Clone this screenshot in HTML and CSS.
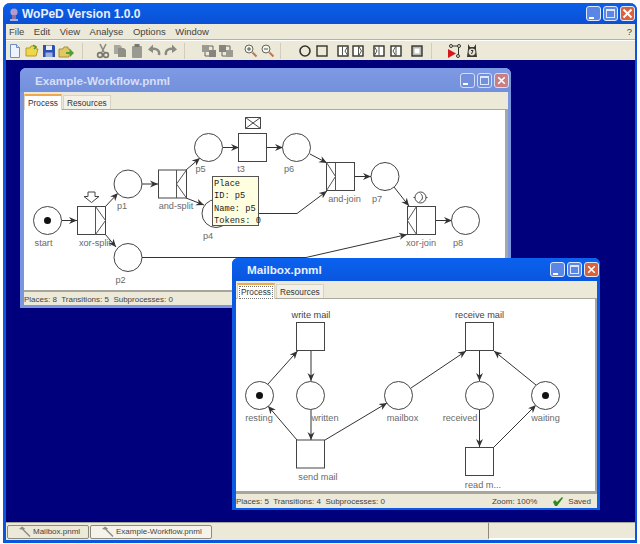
FILE: index.html
```html
<!DOCTYPE html>
<html>
<head lang="en">
    <meta charset="UTF-8">
    <title>WoPeD Version 1.0.0</title>
    <link rel="stylesheet" href="styles.css">
</head>
<body>
<div class="app">
    <div class="app-title">
        <svg class="app-logo" width="10" height="14" viewBox="0 0 10 14">
            <circle cx="5" cy="5" r="3.6" fill="#b89ac8"/>
            <rect x="3" y="8" width="4" height="4" fill="#8e6f9e"/>
            <path d="M1 13h8" stroke="#e8d8e8" stroke-width="1.4"/>
        </svg>
        <span class="app-name">WoPeD Version 1.0.0</span>
        <div class="ctrls">
            <span class="ctrl"><i class="ico-min"></i></span>
            <span class="ctrl"><i class="ico-max"></i></span>
            <span class="ctrl ctrl-close">
                <svg width="11" height="11" viewBox="0 0 11 11"><path d="M1.5 1.5l8 8M9.5 1.5l-8 8" stroke="#fff" stroke-width="2"/></svg>
            </span>
        </div>
    </div>

    <div class="menubar">
        <span>File</span><span>Edit</span><span>View</span><span>Analyse</span><span>Options</span><span>Window</span>
        <span class="menu-help">?</span>
    </div>

    <div class="toolbar">
        <div class="tgroup tgroup-file">
            <svg class="icon" viewBox="0 0 16 16"><path d="M3.5 1.5h6l3 3v10h-9z" fill="#eef3fb" stroke="#6f8fc4"/><path d="M9.5 1.5v3h3" fill="#cfdcf0" stroke="#6f8fc4"/></svg>
            <svg class="icon" viewBox="0 0 16 16"><path d="M2 5h4l1-2h5v3h2l-2 7H2z" fill="#f0d64a" stroke="#b59a2a"/><path d="M9 2l3 2-2 2" fill="none" stroke="#4a9a3a" stroke-width="1.5"/></svg>
            <svg class="icon" viewBox="0 0 16 16"><path d="M2 2h11l1 1v11H2z" fill="#2c4fb0"/><rect x="5" y="2.5" width="6" height="4.5" fill="#e8eefa"/><rect x="4.5" y="9.5" width="7" height="4.5" fill="#9ab0e0"/></svg>
            <svg class="icon" viewBox="0 0 16 16"><path d="M1 6h4l1-2h4v2h2l-1 8H1z" fill="#e2c860" stroke="#a89040"/><path d="M8 9h4V6l4 4-4 4v-3H8z" fill="#4e9e3a"/></svg>
        </div>
        <div class="tgroup tgroup-edit">
            <svg class="icon" viewBox="0 0 16 16"><path d="M5 1l4 8M11 1L7 9" stroke="#8a8a84" stroke-width="1.6" fill="none"/><circle cx="5" cy="12" r="2.4" fill="none" stroke="#77776f" stroke-width="1.6"/><circle cx="11" cy="12" r="2.4" fill="none" stroke="#77776f" stroke-width="1.6"/></svg>
            <svg class="icon" viewBox="0 0 16 16"><path d="M2 2h6l2 2v7H2z" fill="#a8a89e"/><path d="M6 5h6l2 2v7H6z" fill="#8f8f86"/></svg>
            <svg class="icon" viewBox="0 0 16 16"><rect x="3" y="3" width="10" height="12" rx="1" fill="#9a9a90"/><rect x="5.5" y="1" width="5" height="3" fill="#77776f"/></svg>
            <svg class="icon" viewBox="0 0 16 16"><path d="M13 12c1-4-2-7-7-6" fill="none" stroke="#8a8a82" stroke-width="2.4"/><path d="M7 1.5L2 6.5l5 3.5z" fill="#8a8a82"/></svg>
            <svg class="icon" viewBox="0 0 16 16"><path d="M3 12c-1-4 2-7 7-6" fill="none" stroke="#8a8a82" stroke-width="2.4"/><path d="M9 1.5l5 5-5 3.5z" fill="#8a8a82"/></svg>
        </div>
        <div class="tgroup tgroup-view">
            <svg class="icon" viewBox="0 0 16 16"><rect x="1" y="2" width="7" height="7" fill="#9a9a92"/><rect x="8" y="7" width="7" height="7" fill="#85857d"/><path d="M4 9v4h4M8 3h4v4" fill="none" stroke="#66665f"/></svg>
            <svg class="icon" viewBox="0 0 16 16"><rect x="1" y="2" width="7" height="7" fill="#85857d"/><rect x="8" y="7" width="7" height="7" fill="#9a9a92"/><path d="M4 9v4h4M8 3h4v4" fill="none" stroke="#66665f"/></svg>
            <svg class="icon icon-zoom" viewBox="0 0 16 16"><circle cx="6" cy="6" r="4" fill="#f4f4ee" stroke="#66665f"/><path d="M4 6h4M6 4v4" stroke="#55554f"/><path d="M9.5 9.5l4 4" stroke="#b87a50" stroke-width="2"/></svg>
            <svg class="icon" viewBox="0 0 16 16"><circle cx="6" cy="6" r="4" fill="#f4f4ee" stroke="#66665f"/><path d="M4 6h4" stroke="#55554f"/><path d="M9.5 9.5l4 4" stroke="#b87a50" stroke-width="2"/></svg>
        </div>
        <div class="tgroup tgroup-draw">
            <svg class="icon" viewBox="0 0 16 16"><circle cx="8" cy="8" r="5" fill="none" stroke="#33332e" stroke-width="1.6"/></svg>
            <svg class="icon" viewBox="0 0 16 16"><rect x="3" y="3" width="10" height="10" fill="none" stroke="#33332e" stroke-width="1.4"/></svg>
            <svg class="icon icon-gap" viewBox="0 0 16 16"><rect x="3" y="3" width="10" height="10" fill="#fff" stroke="#33332e" stroke-width="1.4"/><path d="M7.5 3v10M13 3l-3 5 3 5" fill="none" stroke="#55554f"/></svg>
            <svg class="icon icon-tight" viewBox="0 0 16 16"><rect x="3" y="3" width="10" height="10" fill="#fff" stroke="#33332e" stroke-width="1.4"/><path d="M8.500 3v10M8.500 3l3 5-3 5" fill="none" stroke="#55554f"/></svg>
            <svg class="icon icon-gap" viewBox="0 0 16 16"><rect x="3" y="3" width="10" height="10" fill="#fff" stroke="#33332e" stroke-width="1.4"/><path d="M8 3v10M3 3l3 5-3 5" fill="none" stroke="#55554f"/></svg>
            <svg class="icon" viewBox="0 0 16 16"><rect x="3" y="3" width="10" height="10" fill="#fff" stroke="#33332e" stroke-width="1.4"/><path d="M8 3v10M8 3L5 8l3 5" fill="none" stroke="#55554f"/></svg>
            <svg class="icon icon-gap" viewBox="0 0 16 16"><rect x="3" y="3" width="10" height="10" fill="#b8b8ae" stroke="#33332e" stroke-width="1.4"/><rect x="5.500" y="5.500" width="5" height="5" fill="#fff"/></svg>
        </div>
        <div class="tgroup tgroup-run">
            <svg class="icon" viewBox="0 0 16 16"><circle cx="4" cy="3" r="1.500" fill="none" stroke="#33332e"/><circle cx="12" cy="3" r="1.500" fill="none" stroke="#33332e"/><circle cx="11" cy="13" r="1.500" fill="none" stroke="#33332e"/><path d="M5.500 3h5M11.500 4.500v7" stroke="#33332e"/><path d="M1 6l8 4.500L1 15z" fill="#d8141c"/></svg>
            <svg class="icon" viewBox="0 0 16 16"><path d="M4 1l2 3h4l2-3v5l1 8H3l1-8z" fill="#3a3a36"/><circle cx="8" cy="9" r="3.400" fill="#e4e0cc"/><path d="M7 7.500h2L7.500 11" fill="none" stroke="#33332e"/></svg>
        </div>
    </div>

    <div class="desktop">
        <div class="win win-flow">
            <div class="win-title">
                <span class="win-name">Example-Workflow.pnml</span>
                <div class="ctrls ctrls-small">
                    <span class="ctrl"><i class="ico-min"></i></span>
                    <span class="ctrl"><i class="ico-max"></i></span>
                    <span class="ctrl ctrl-close">
                        <svg width="9" height="9" viewBox="0 0 11 11"><path d="M1.500 1.500l8 8M9.500 1.500l-8 8" stroke="#fff" stroke-width="2"/></svg>
                    </span>
                </div>
            </div>
            <div class="tabs">
                <span class="tab tab-on">Process</span>
                <span class="tab">Resources</span>
            </div>
            <div class="canvas">
                <svg class="net" viewBox="24 110 481 180">
                    <defs>
                        <marker id="arrow" markerUnits="userSpaceOnUse" markerWidth="9" markerHeight="8" refX="8" refY="4" orient="auto">
                            <path d="M0 0.500L8 4 0 7.500 2.500 4z" fill="#333"/>
                        </marker>
                    </defs>
                    <g class="edges">
                        <path d="M62 220.500H77"/>
                        <path d="M105 207L118 193"/>
                        <path d="M105 234L116 247"/>
                        <path d="M142 184H158"/>
                        <path d="M186 170L200 158"/>
                        <path d="M186 198L204 205"/>
                        <path d="M223 147.500H239"/>
                        <path d="M267 147.500H283"/>
                        <path d="M310 154L327 163"/>
                        <path d="M230 213.500H297L327 191"/>
                        <path d="M355 176.500H371"/>
                        <path d="M394 187L409 206"/>
                        <path d="M436 220.500H452"/>
                        <path d="M142 257.500H306L407 234.500"/>
                    </g>
                    <g class="nodes">
                        <circle cx="47.500" cy="220.500" r="14"/>
                        <circle cx="128" cy="184" r="14"/>
                        <circle cx="128" cy="257.500" r="14"/>
                        <circle cx="208.500" cy="147.500" r="14"/>
                        <circle cx="216" cy="213.500" r="14"/>
                        <circle cx="296.500" cy="147.500" r="14"/>
                        <circle cx="385" cy="176.500" r="14"/>
                        <circle cx="465.500" cy="220.500" r="14"/>
                        <rect x="77.500" y="206.500" width="28" height="28"/>
                        <rect x="158.500" y="170" width="28" height="28"/>
                        <rect x="238.500" y="133.500" width="28" height="28"/>
                        <rect x="326.500" y="162.500" width="28" height="28"/>
                        <rect x="407.500" y="206.500" width="28" height="28"/>
                    </g>
                    <g class="gates">
                        <path d="M95.500 206.500V234.500M95.500 206.500L105.500 220.500 95.500 234.500"/>
                        <path d="M176.500 170V198M186.500 170L176.500 184 186.500 198"/>
                        <path d="M335.500 162.500V190.500M326.500 162.500L335.500 176.500 326.500 190.500"/>
                        <path d="M416.500 206.500V234.500M416.500 206.500L407.500 220.500 416.500 234.500"/>
                    </g>
                    <circle class="token" cx="47.500" cy="220.500" r="3.500"/>
                    <path class="trigger" d="M88 192H95V196.500H99L91.500 202.500 84 196.500H88z"/>
                    <path class="trigger" d="M245.500 117.500H260.500V128.500H245.500zM245.500 117.500L260.500 128.500M260.500 117.500L245.500 128.500"/>
                    <circle class="trigger" cx="420.500" cy="197.500" r="5.500"/>
                    <path class="trigger" d="M420.500 193.500C423.500 196 423 200 419.500 201.500M413.500 197.500H415M426 197.500H427.500"/>
                    <text class="lbl" x="43.500" y="246">start</text>
                    <text class="lbl" x="95" y="246">xor-split</text>
                    <text class="lbl" x="122" y="209">p1</text>
                    <text class="lbl" x="120.500" y="283">p2</text>
                    <text class="lbl" x="200.500" y="172">p5</text>
                    <text class="lbl" x="176" y="209">and-split</text>
                    <text class="lbl" x="208" y="239">p4</text>
                    <text class="lbl" x="241" y="172">t3</text>
                    <text class="lbl" x="289" y="172">p6</text>
                    <text class="lbl" x="344.500" y="202">and-join</text>
                    <text class="lbl" x="377" y="202">p7</text>
                    <text class="lbl" x="421" y="246">xor-join</text>
                    <text class="lbl" x="458" y="246">p8</text>
                </svg>
                <div class="tip">Place<br>ID: p5<br>Name: p5<br>Tokens: 0</div>
            </div>
            <div class="status">
                <span>Places: 8&nbsp; Transitions: 5&nbsp; Subprocesses: 0</span>
            </div>
        </div>

        <div class="win win-mail">
            <div class="win-title">
                <span class="win-name">Mailbox.pnml</span>
                <div class="ctrls ctrls-small">
                    <span class="ctrl"><i class="ico-min"></i></span>
                    <span class="ctrl"><i class="ico-max"></i></span>
                    <span class="ctrl ctrl-close">
                        <svg width="9" height="9" viewBox="0 0 11 11"><path d="M1.500 1.500l8 8M9.500 1.500l-8 8" stroke="#fff" stroke-width="2"/></svg>
                    </span>
                </div>
            </div>
            <div class="tabs">
                <span class="tab tab-on tab-focus"><b>Process</b></span>
                <span class="tab">Resources</span>
            </div>
            <div class="canvas">
                <svg class="net" viewBox="236 299 359 192">
                    <g class="edges">
                        <path d="M268 384L297.500 351"/>
                        <path d="M311 350.500V381"/>
                        <path d="M311 409.500V440"/>
                        <path d="M297 440L268 406"/>
                        <path d="M325 440L387 403"/>
                        <path d="M411 388L466 351"/>
                        <path d="M479.500 350.500V381"/>
                        <path d="M479.500 409.500V447"/>
                        <path d="M494 447L536 405"/>
                        <path d="M536 385L494 351"/>
                    </g>
                    <g class="nodes">
                        <circle cx="259.500" cy="395.500" r="14"/>
                        <circle cx="310.500" cy="395.500" r="14"/>
                        <circle cx="398.500" cy="395.500" r="14"/>
                        <circle cx="479.500" cy="395.500" r="14"/>
                        <circle cx="545.500" cy="395.500" r="14"/>
                        <rect x="296.500" y="322.500" width="28" height="28"/>
                        <rect x="465.500" y="322.500" width="28" height="28"/>
                        <rect x="296.500" y="440" width="28" height="28"/>
                        <rect x="465.500" y="447.500" width="28" height="28"/>
                    </g>
                    <circle class="token" cx="259.500" cy="395.500" r="3.500"/>
                    <circle class="token" cx="545.500" cy="395.500" r="3.500"/>
                    <text class="lbl lbl-dark" x="311" y="318">write mail</text>
                    <text class="lbl lbl-dark" x="479.500" y="318">receive mail</text>
                    <text class="lbl" x="259" y="421">resting</text>
                    <text class="lbl" x="325" y="421">written</text>
                    <text class="lbl" x="402.500" y="421">mailbox</text>
                    <text class="lbl" x="460" y="421">received</text>
                    <text class="lbl" x="545.500" y="421">waiting</text>
                    <text class="lbl" x="318" y="480">send mail</text>
                    <text class="lbl" x="483" y="488">read m...</text>
                </svg>
            </div>
            <div class="status">
                <span>Places: 5&nbsp; Transitions: 4&nbsp; Subprocesses: 0</span>
                <span class="status-zoom">Zoom: 100%</span>
                <svg class="status-check" width="12" height="10" viewBox="0 0 12 10"><path d="M1 5l2 4h2l6-8-1-1-5 5-2-2z" fill="#2f8a1e"/></svg>
                <span class="status-saved">Saved</span>
            </div>
        </div>
    </div>

    <div class="taskbar">
        <span class="task">
            <svg class="task-ico" width="13" height="11" viewBox="0 0 13 11"><path d="M1 3L4 0.500 7 2.500 5.500 4z" fill="#8d8d88"/><path d="M5 3.500l7 7" stroke="#8d8d88" stroke-width="1.500"/></svg>
            Mailbox.pnml
        </span>
        <span class="task task-long">
            <svg class="task-ico" width="13" height="11" viewBox="0 0 13 11"><path d="M1 3L4 0.500 7 2.500 5.500 4z" fill="#8d8d88"/><path d="M5 3.500l7 7" stroke="#8d8d88" stroke-width="1.500"/></svg>
            Example-Workflow.pnml
        </span>
        <span class="task-end"></span>
    </div>
</div>
</body>
</html>
```

FILE: styles.css
```css
* {
    box-sizing: border-box;
    margin: 0;
    padding: 0;
}

html, body {
    height: 100%;
    overflow: hidden;
    background: #fff;
}

body {
    font-family: "Liberation Sans", Arial, sans-serif;
    font-size: 11px;
    color: #333;
}

.app {
    display: flex;
    flex-direction: column;
    width: 634px;
    height: 540px;
    margin: 3px 0 0 3px;
    border: 3px solid #0a56dc;
    border-top: 0;
    border-right-width: 2px;
    border-radius: 7px 7px 0 0;
    background: #ece9d8;
}

/* main title bar */
.app-title {
    display: flex;
    align-items: center;
    height: 21px;
    margin: 0 -2px 0 -3px;
    padding: 0 2px 0 5px;
    border-radius: 7px 7px 0 0;
    background: linear-gradient(#0a5fe8 0, #0a58e0 50%, #0a50d4 100%);
}

.app-logo {
    margin-left: 1px;
}

.app-name {
    margin-left: 3px;
    font-size: 12px;
    font-weight: bold;
    color: #e8f0ff;
}

.ctrls {
    display: flex;
    gap: 2px;
    margin-left: auto;
}

.ctrl {
    display: flex;
    align-items: center;
    justify-content: center;
    position: relative;
    width: 15px;
    height: 15px;
    border: 1px solid #dfe8fb;
    border-radius: 3px;
    background: #5a86e6;
}

.ctrl-close {
    background: #d9613c;
}

.ico-min {
    width: 5px;
    height: 2px;
    margin: 8px 5px 0 0;
    background: #fff;
}

.ico-max {
    width: 9px;
    height: 9px;
    border: 1px solid #dfe8fb;
    border-top-width: 2px;
}

/* menu and tools */
.menubar {
    display: flex;
    align-items: center;
    gap: 9.500px;
    height: 16px;
    padding: 0 3px;
    border-bottom: 1px solid #b5b2a4;
    font-size: 9.500px;
    color: #444;
}

.menu-help {
    margin-left: auto;
}

.toolbar {
    display: flex;
    align-items: center;
    height: 20px;
    padding-left: 1px;
    border-top: 1px solid #fff;
}

.tgroup {
    display: flex;
    gap: 1px;
}

.tgroup-edit {
    margin-left: 8px;
    padding-left: 12px;
    border-left: 1px solid #d0cdbc;
}

.tgroup-view {
    margin-left: 5px;
    padding-left: 16px;
    border-left: 1px solid #d0cdbc;
}

.tgroup-draw {
    margin-left: 4px;
    padding-left: 16px;
    border-left: 1px solid #d0cdbc;
}

.tgroup-run {
    margin-left: 6px;
    padding-left: 15px;
    border-left: 1px solid #d0cdbc;
}

.icon {
    display: block;
    flex: none;
    width: 16px;
    height: 16px;
}

.icon-zoom {
    margin-left: 8px;
}

.icon-gap {
    margin-left: 4px;
}

.icon-tight {
    margin-left: -2px;
}

/* desktop with the inner windows */
.desktop {
    position: relative;
    flex: 1;
    background: #00007c;
}

.win {
    position: absolute;
    display: flex;
    flex-direction: column;
    border-radius: 6px 6px 0 0;
    background: #ece9d8;
}

.win-flow {
    left: 14px;
    top: 8px;
    width: 491px;
    height: 240px;
    border: 3px solid #7b96e0;
    border-top: 0;
    border-left-width: 4px;
    --title-bg: linear-gradient(#7f9ae4, #7390dc);
    --title-fg: #d6def6;
}

.win-mail {
    left: 226px;
    top: 198px;
    width: 368px;
    height: 252px;
    border: 2px solid #0a5ae2;
    border-top: 0;
    border-left-width: 4px;
    border-right-width: 3px;
    --title-bg: linear-gradient(#0a62ee, #0a56de);
    --title-fg: #e8f0ff;
}

.win-title {
    display: flex;
    align-items: center;
    height: 24px;
    margin: 0 -3px 0 -4px;
    padding: 0 2px 0 15px;
    border-radius: 6px 6px 0 0;
    background: var(--title-bg);
}

.win-mail .win-title {
    height: 23px;
    padding-right: 1px;
}

.win-name {
    font-size: 11.700px;
    font-weight: bold;
    color: var(--title-fg);
}

.ctrls-small .ctrl {
    width: 15px;
    height: 15px;
}

.win-flow .ctrl {
    border-color: #d6def6;
    background: #7390dc;
}

.win-flow .ctrl-close {
    background: #c87f84;
}

.tabs {
    display: flex;
    align-items: flex-end;
    gap: 1px;
    height: 18px;
    border-bottom: 1px solid #aaa99e;
}

.win-mail .tabs {
    padding-left: 1px;
}

.tab {
    height: 14px;
    padding: 0 3px;
    line-height: 14px;
    border: 1px solid #d6d3c4;
    border-bottom: 0;
    background: #f4f2e8;
    font-size: 8.300px;
    color: #333;
}

.tab-on {
    height: 16px;
    width: 38px;
    line-height: 15px;
    border-top: 2px solid #f0a848;
    background: #fff;
    position: relative;
    top: 1px;
}

.tab-focus {
    padding: 0 1px;
}

.tab-focus b {
    display: block;
    font-weight: normal;
    line-height: 11px;
    margin-top: 1px;
    padding-left: 1px;
    border: 1px dotted #777;
}

.canvas {
    position: relative;
    flex: 1;
    min-height: 0;
    background: #fff;
    border-right: 3px solid #a4a8ac;
    border-bottom: 2px solid #a8a69a;
}

.win-mail .canvas {
    border-right-width: 2px;
    border-bottom-width: 3px;
}

.net {
    display: block;
    width: 100%;
    height: 100%;
}

.edges path {
    fill: none;
    stroke: #333;
    marker-end: url(#arrow);
}

.nodes circle, .nodes rect {
    fill: #fff;
    stroke: #444;
}

.gates path {
    fill: none;
    stroke: #555;
}

.token {
    fill: #111;
}

.trigger {
    fill: #fff;
    stroke: #444;
}

.lbl {
    font-size: 9.200px;
    fill: #6a6a6a;
    text-anchor: middle;
}

.lbl-dark {
    fill: #444;
}

.tip {
    position: absolute;
    left: 188px;
    top: 66px;
    width: 47px;
    height: 50px;
    padding: 1px 0 0 1px;
    border: 1px solid #555;
    background: #ffffe0;
    font-family: "Liberation Mono", monospace;
    font-size: 8.700px;
    line-height: 12.300px;
    white-space: nowrap;
    color: #222;
}

.status {
    display: flex;
    align-items: center;
    height: 14px;
    padding-top: 1px;
    font-size: 8px;
    color: #444;
    white-space: nowrap;
}

.win-flow .status {
    height: 13px;
}

.status-zoom {
    margin-left: auto;
}

.status-check {
    margin-left: 15px;
}

.status-saved {
    margin: 0 6px 0 4px;
}

/* bottom window list */
.taskbar {
    display: flex;
    align-items: center;
    gap: 1px;
    height: 18px;
    padding-left: 1px;
    border-top: 1px solid #a8a69a;
    font-size: 8px;
    color: #444;
}

.task {
    display: flex;
    align-items: center;
    gap: 2px;
    width: 82px;
    height: 14px;
    padding-left: 10px;
    border: 1px solid #8c8a7e;
    border-radius: 2px;
    background: #ece9d8;
    white-space: nowrap;
}

.task-long {
    width: 122px;
    background: #f6f4ea;
}

.task-ico {
    flex: none;
}

.task-end {
    align-self: stretch;
    width: 147px;
    margin-left: auto;
    border-left: 1px solid #8c8a7e;
    border-bottom: 2px solid #fff;
}
```
